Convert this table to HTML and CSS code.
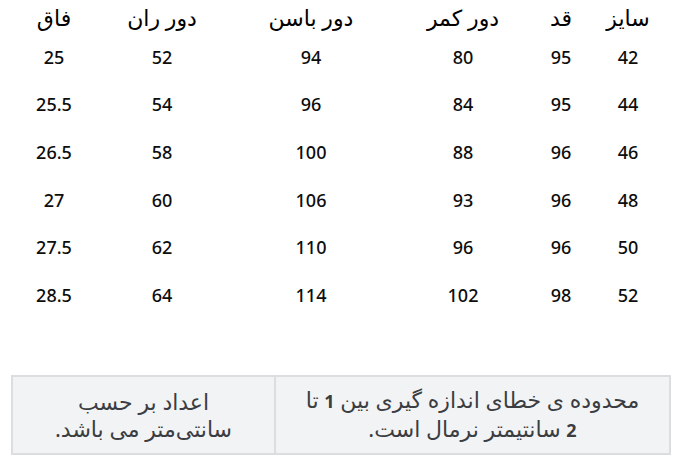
FILE: index.html
```html
<!DOCTYPE html>
<html lang="fa" dir="rtl">
<head>
<meta charset="utf-8">
<link rel="stylesheet" href="styles.css">
</head>
<body>
<div class="page">
  <div class="sizes">
    <div class="th">سایز</div><div class="th">قد</div><div class="th">دور کمر</div><div class="th">دور باسن</div><div class="th">دور ران</div><div class="th">فاق</div>
    <div class="td">42</div><div class="td">95</div><div class="td">80</div><div class="td">94</div><div class="td">52</div><div class="td">25</div>
    <div class="td">44</div><div class="td">95</div><div class="td">84</div><div class="td">96</div><div class="td">54</div><div class="td">25.5</div>
    <div class="td">46</div><div class="td">96</div><div class="td">88</div><div class="td">100</div><div class="td">58</div><div class="td">26.5</div>
    <div class="td">48</div><div class="td">96</div><div class="td">93</div><div class="td">106</div><div class="td">60</div><div class="td">27</div>
    <div class="td">50</div><div class="td">96</div><div class="td">96</div><div class="td">110</div><div class="td">62</div><div class="td">27.5</div>
    <div class="td">52</div><div class="td">98</div><div class="td">102</div><div class="td">114</div><div class="td">64</div><div class="td">28.5</div>
  </div>
  <div class="notes">
    <div class="note note-main"><p class="note-text">محدوده ی خطای اندازه گیری بین <b class="num">1</b> تا<br><b class="num">2</b> سانتیمتر نرمال است.</p></div>
    <div class="note note-side"><p class="note-text">اعداد بر حسب<br>سانتی‌متر می باشد.</p></div>
  </div>
</div>
</body>
</html>
```

FILE: styles.css
```css
html, body {
  margin: 0;
  padding: 0;
  background: #ffffff;
}
body {
  font-family: "Noto Sans", "DejaVu Sans", sans-serif;
  color: #111111;
  direction: rtl;
}
.page {
  width: 680px;
  height: 466px;
  display: flex;
  flex-direction: column;
}
.sizes {
  display: grid;
  grid-template-columns: 104px 30px 166px 138px 160px 56px;
  grid-template-rows: 33px repeat(6, 47.6px);
  justify-content: start;
}
.th, .td {
  display: flex;
  align-items: center;
  justify-content: center;
  white-space: nowrap;
}
.th {
  color: #000000;
  font-size: 22px;
  line-height: 30px;
}
.td {
  color: #0d0d0d;
  font-size: 18px;
  line-height: 24px;
  font-weight: 500;
}
.notes {
  margin: 56px 9px 0 11px;
  display: flex;
  border: 2px solid #dcdde1;
  background: #f2f3f5;
  height: 76px;
}
.note {
  display: flex;
  align-items: center;
  justify-content: center;
  text-align: center;
  font-size: 22px;
  line-height: 27px;
  color: #3a3d42;
}
.note-text {
  margin: 0;
}
.num {
  font-weight: 700;
  font-size: 18px;
}
.note-main {
  width: 393px;
  border-left: 2px solid #dcdde1;
}
.note-side {
  flex: 1;
}
```
